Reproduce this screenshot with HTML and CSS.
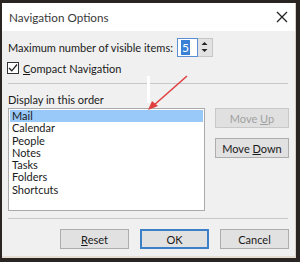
FILE: index.html
```html
<!DOCTYPE html>
<html>
<head>
  <title>Navigation Options</title>
  <link rel="stylesheet" href="styles.css">
</head>
<body>
  <div class="window">
    <div class="titlebar">
      <span class="title">Navigation Options</span>
      <svg class="close" width="12" height="12" viewBox="0 0 12 12">
        <path d="M1 1 L11 11 M11 1 L1 11" stroke="#222" stroke-width="1.3" fill="none"/>
      </svg>
    </div>
    <div class="content">
      <div class="row">
        <span>Maximum number of visible items:</span>
        <div class="spinner">
          <div class="spin-input"><span class="sel">5</span></div>
          <div class="spin-btns">
            <svg width="13" height="18" viewBox="0 0 13 18">
              <path d="M3.5 7 L6.5 4 L9.5 7 Z" fill="#222"/>
              <path d="M3.5 11 L6.5 14 L9.5 11 Z" fill="#222"/>
            </svg>
          </div>
        </div>
      </div>
      <div class="row check-row">
        <span class="checkbox">
          <svg width="10" height="10" viewBox="0 0 10 10">
            <path d="M1 5 L3.8 7.8 L9 1.5" stroke="#222" stroke-width="1.3" fill="none"/>
          </svg>
        </span>
        <span><u>C</u>ompact Navigation</span>
      </div>
      <div class="sep"></div>
      <div class="label">Display in this order</div>
      <div class="order">
        <ul class="listbox">
          <li class="selected">Mail</li>
          <li>Calendar</li>
          <li>People</li>
          <li>Notes</li>
          <li>Tasks</li>
          <li>Folders</li>
          <li>Shortcuts</li>
        </ul>
        <div class="side">
          <button class="btn disabled">Move <u>U</u>p</button>
          <button class="btn">Move <u>D</u>own</button>
        </div>
      </div>
      <div class="sep bottom-sep"></div>
      <div class="footer">
        <button class="btn"><u>R</u>eset</button>
        <button class="btn default">OK</button>
        <button class="btn">Cancel</button>
      </div>
    </div>

    <!-- annotation drawn over the screenshot -->
    <div class="mark"></div>
    <svg class="arrow" width="50" height="40" viewBox="0 0 50 40">
      <path d="M42 2 L8 32" stroke="#e04040" stroke-width="1.6" fill="none"/>
      <path d="M3 36 L7 27 L13 32 Z" fill="#e04040"/>
    </svg>
  </div>
</body>
</html>
```

FILE: styles.css
```css
body {
  margin: 0;
  background: #2a2522;
  font-family: Lato, "Open Sans", Arial, sans-serif;
  font-size: 11px;
  color: #1a1a1a;
}

.window {
  position: relative;
  margin: 3px 4px 0 2px;
  width: 294px;
  height: 255px;
  background: #f0f0f0;
  border-right: 1px solid #d8cfc6;
  border-bottom: 2px solid #e6ddd3;
  box-sizing: border-box;
}

.titlebar {
  height: 28px;
  background: #fff;
  display: flex;
  align-items: center;
  justify-content: space-between;
  padding: 0 7px 0 7px;
  font-size: 11.7px;
  color: #3a3a3a;
}

.content {
  padding: 6px 6px 0 6px;
}

.row {
  display: flex;
  align-items: center;
  height: 20px;
}

.spinner {
  display: flex;
  margin-left: 4px;
  height: 19px;
}

.spin-input {
  width: 21px;
  border: 1px solid #5a8fd6;
  background: #fff;
  box-sizing: border-box;
  padding: 1px 0 0 3px;
}

.sel {
  display: inline-block;
  background: #3a7fd6;
  color: #fff;
  font-size: 12px;
  line-height: 15px;
  padding: 0 1px;
}

.spin-btns {
  width: 15px;
  background: #e2e2e2;
  border: 1px solid #c6c6c6;
  border-left: none;
  box-sizing: border-box;
  display: flex;
  align-items: center;
  justify-content: center;
}

.check-row {
  margin-top: 1px;
}

.checkbox {
  width: 10px;
  height: 10px;
  border: 1px solid #333;
  background: #fff;
  margin: 0 4px 0 -1px;
  display: flex;
}

.sep {
  height: 1px;
  background: #c8c8c8;
  margin: 5px 1px 0 0;
}

.label {
  margin: 8px 0 0 0;
  line-height: 15px;
}

.order {
  display: flex;
  margin-top: 1px;
}

.listbox {
  list-style: none;
  margin: 0;
  padding: 1px;
  width: 198px;
  height: 103px;
  box-sizing: border-box;
  background: #fff;
  border: 1px solid #aaa;
}

.listbox li {
  height: 12.3px;
  line-height: 12.3px;
  padding-left: 2px;
}

.listbox .selected {
  background: #99c9f8;
}

.side {
  display: flex;
  flex-direction: column;
  gap: 10px;
  margin-left: 10px;
}

.btn {
  font-family: inherit;
  font-size: 11px;
  width: 74px;
  height: 20px;
  padding: 0;
  background: #e1e1e1;
  border: 1px solid #adadad;
  color: #1a1a1a;
}

.btn.disabled {
  color: #a0a0a0;
  background: #e0e0e0;
  border-color: #c8c8c8;
}

.btn.default {
  border: 2px solid #3c80c8;
}

.bottom-sep {
  margin-top: 7px;
}

.footer {
  display: flex;
  justify-content: flex-end;
  gap: 11px;
  margin: 10px 0 0 0;
}

.footer .btn {
  width: 69px;
}

.mark {
  position: absolute;
  left: 145px;
  top: 73px;
  width: 3px;
  height: 27px;
  background: #fff;
}

.arrow {
  position: absolute;
  left: 143px;
  top: 71px;
}
```
